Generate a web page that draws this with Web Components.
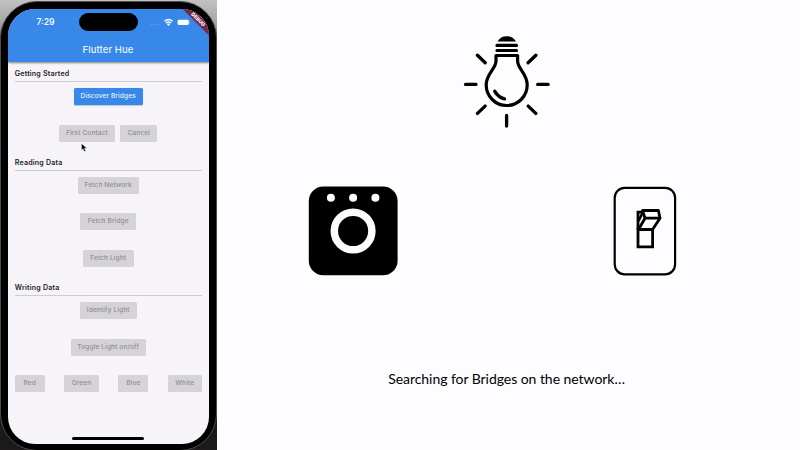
<!DOCTYPE html>
<html lang="en"><head><meta charset="utf-8"><title>Flutter Hue</title>
<style>body{margin:0;background:#fdfcff;overflow:hidden}</style></head>
<body><hue-demo></hue-demo>
<script>
const define=(name,html)=>{
  const t=document.createElement('template');t.innerHTML=html;
  customElements.define(name,class extends HTMLElement{
    constructor(){super();this.attachShadow({mode:'open'}).append(t.content.cloneNode(true));}
    connectedCallback(){
      const w=this.getAttribute('w');if(w)this.style.setProperty('--w',w+'px');
    }
  });
};
define('hue-button',`<style>
:host{display:flex;box-sizing:border-box;width:var(--w);height:17px;border-radius:1.6px;align-items:center;justify-content:center;background:#d5d3d7;color:#918e94;font:500 6.6px/17px Inter,sans-serif;letter-spacing:.1px;white-space:nowrap}
:host([primary]){background:#3788e8;color:#e4f0ff;box-shadow:0 .5px 1px #0003}
</style><slot></slot>`);
define('hue-row',`<style>
:host{display:flex;box-sizing:border-box;height:36.3px;padding-bottom:1.2px;align-items:center;justify-content:center;gap:5.3px}
:host([spread]){justify-content:space-between}
</style><slot></slot>`);
define('hue-section',`<style>
:host{display:block}
header{box-sizing:border-box;height:19.3px;margin-bottom:-3px;border-bottom:1px solid #cfccd0;padding-top:6px;font:600 7.1px/10px Inter,sans-serif;color:#252427;letter-spacing:.18px}
</style><header><slot name="title"></slot></header><slot></slot>`);
define('status-bar',`<style>
:host{display:grid;grid-template-columns:76px 49px 1fr;height:27px;align-items:center;color:#f2f8ff;font:600 8.5px/12px Inter,sans-serif}
.time{padding-left:29px;letter-spacing:0}
.island{width:59px;height:17.5px;border-radius:9px;background:#000;margin-left:-5px}
svg{display:block;margin-left:7px}
</style><span class="time">7:29</span><span class="island"></span>
<svg width="60" height="18" viewBox="140 13 60 18"><g fill="#73abed"><circle cx="151" cy="24.5" r=".6"/><circle cx="153.7" cy="24.5" r=".6"/><circle cx="156.4" cy="24.5" r=".6"/><circle cx="159.1" cy="24.5" r=".6"/></g><g fill="none" stroke="#f4f9ff" stroke-width="1.4"><path d="M164.4 21.2Q168.5 17.7 172.6 21.2M166 23.1Q168.5 21 171 23.1"/></g><path d="M166.9 24.2Q168.5 23 170.1 24.2L168.5 26Z" fill="#fff"/><rect x="177.6" y="19.7" width="11.2" height="5.3" rx="1.4" fill="#fff"/><rect x="189.4" y="21.5" width=".8" height="2" rx=".4" fill="#9bc6f5"/></svg>`);
define('debug-banner',`<style>
:host{position:absolute;right:0;top:0;width:28px;height:28px;overflow:hidden}
span{position:absolute;left:-5.7px;top:7.1px;width:46px;height:7.2px;background:#7a2745;color:#fff;font:800 5px/7.2px Inter,sans-serif;text-align:center;transform:rotate(45deg)}
</style><span>DEBUG</span>`);
define('mouse-pointer',`<style>:host{position:absolute;left:80.5px;top:143px;width:7px;height:10px}svg{display:block}</style>
<svg width="7" height="10" viewBox="0 0 7 10"><path d="M.5 .5V7.2L2.1 5.8L3.3 8.6L4.7 8L3.5 5.3H5.8Z" fill="#080808" stroke="#fff" stroke-width=".4"/></svg>`);
define('phone-frame',`<style>
:host{display:block;position:relative;box-sizing:border-box;width:217px;height:450px;overflow:hidden;background:linear-gradient(#c3c2c3,#aaa9aa 20px,#1c191a 75px)}
.case{position:absolute;inset:1px 0 -1px 0;box-sizing:border-box;border:1.5px solid #4e4b4e;border-radius:37px;background:#000;padding:6.5px 6.3px 0 6.5px}
.screen{position:relative;box-sizing:border-box;width:201px;height:435px;border-radius:27px;overflow:hidden;background:#f6f4f8}
.bar{height:53.5px;background:#3788e8;box-shadow:0 .7px 2px #0007;color:#e9f3ff;position:relative}
h1{margin:0;font:500 9.5px/12px Inter,sans-serif;text-align:center;padding:8px 0 0;letter-spacing:.1px}
main{padding:.9px 6.9px 0 7.3px}
.home{width:72px;height:2.3px;border-radius:2px;background:#000;margin:35.2px auto 0}
</style><div class="case"><div class="screen"><div class="bar"><status-bar></status-bar><h1>Flutter Hue</h1></div><main><slot></slot></main><div class="home"></div><debug-banner></debug-banner></div></div><mouse-pointer></mouse-pointer>`);
define('bulb-icon',`<style>:host,svg{display:block}</style>
<svg width="90" height="96" viewBox="462 34 90 96" fill="none" stroke="#000" stroke-linecap="round"><path d="M497.5 41.5C499.5 38 502.5 36.2 506.6 36.2S514 38 516 41.5Z" fill="#000" stroke="none"/><path d="M497 45.4H516.5M497 50.5H516.5" stroke-width="3.2"/><path d="M496 55.5H517.6V61C517.6 69 527.2 73.2 527.2 85A20.5 20.5 0 0 1 486.2 85C486.2 73.2 496 69 496 61Z" stroke-width="3.2" stroke-linejoin="round"/><path d="M494.8 91.3Q498.5 97.5 504.5 98.8" stroke-width="3.4"/><path d="M465.5 84.4H476M537.7 84.4H548.1M506.6 115.5V126M477.4 55.2L485.2 62.8M535.9 55.2L528.1 62.8M477.5 113.4L485.1 106.1M535.8 113.4L528.2 106.1" stroke-width="3.3"/></svg>`);
define('bridge-icon',`<style>:host,svg{display:block}</style>
<svg width="90" height="90" viewBox="308 186 90 90"><rect x="308.8" y="186.5" width="88.8" height="88.8" rx="14.5"/><g fill="#fdfcff"><circle cx="330.9" cy="197.7" r="4"/><circle cx="353.1" cy="197.7" r="4"/><circle cx="375.4" cy="197.7" r="4"/></g><circle cx="353.1" cy="231" r="18.8" fill="none" stroke="#fdfcff" stroke-width="7.5"/></svg>`);
define('switch-icon',`<style>:host,svg{display:block}</style>
<svg width="64" height="90" viewBox="613 186 64 90" fill="none" stroke="#000"><rect x="614.7" y="187.9" width="60.4" height="86.4" rx="10" stroke-width="2.2"/><g stroke-width="2.8" stroke-linejoin="miter"><path d="M638 229.5H652.6V246.8H638Z"/><path d="M638 229.5V212.2H643.5"/><path d="M638.5 229.5L645 218.2H660L652.6 229.5" stroke-linejoin="round"/><path d="M645 218.2L642.5 210.5H658.4L660 218.2" stroke-linejoin="round"/><path d="M643 212L638.5 221" stroke-width="2.6"/></g></svg>`);
define('caption-text',`<style>:host{display:block;font:400 14px/20px Lato,sans-serif;color:#000;letter-spacing:-.05px;white-space:nowrap}</style><slot></slot>`);
define('network-scene',`<style>
:host{display:grid;box-sizing:border-box;height:450px;grid-template-rows:96px 90px 20px;padding-top:34px;justify-items:center}
.devices{display:flex;justify-content:space-between;width:369px;margin:56px 32px 0 0}
bulb-icon{margin-right:3px}
caption-text{margin-top:149px;margin-right:4px}
</style><bulb-icon></bulb-icon><div class="devices"><bridge-icon></bridge-icon><switch-icon></switch-icon></div><caption-text>Searching for Bridges on the network…</caption-text>`);
define('hue-demo',`<style>:host{display:grid;grid-template-columns:217px 583px;height:450px;overflow:hidden}</style>
<phone-frame>
<hue-section><span slot="title">Getting Started</span>
<hue-row><hue-button primary w="69">Discover Bridges</hue-button></hue-row>
<hue-row><hue-button w="56">First Contact</hue-button><hue-button w="37">Cancel</hue-button></hue-row></hue-section>
<hue-section><span slot="title">Reading Data</span>
<hue-row><hue-button w="61">Fetch Network</hue-button></hue-row>
<hue-row><hue-button w="55.5">Fetch Bridge</hue-button></hue-row>
<hue-row><hue-button w="51">Fetch Light</hue-button></hue-row></hue-section>
<hue-section><span slot="title">Writing Data</span>
<hue-row><hue-button w="57">Identify Light</hue-button></hue-row>
<hue-row><hue-button w="74.6">Toggle Light on/off</hue-button></hue-row>
<hue-row spread><hue-button w="30">Red</hue-button><hue-button w="34.4">Green</hue-button><hue-button w="30">Blue</hue-button><hue-button w="33.7">White</hue-button></hue-row></hue-section>
</phone-frame><network-scene></network-scene>`);
</script></body></html>
